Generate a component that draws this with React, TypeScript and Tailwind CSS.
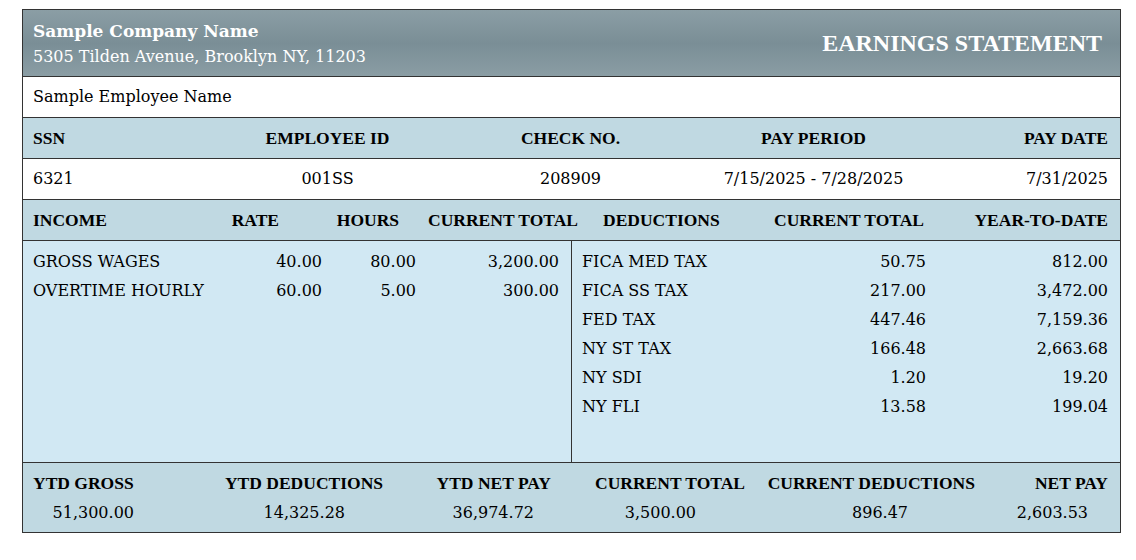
import React from "react";

const reg = "font-['DejaVu_Serif',serif]";
const hdr = "font-['Liberation_Serif',serif] font-bold text-[17.5px]";

export default function App() {
  const income = [
    ["GROSS WAGES", "40.00", "80.00", "3,200.00"],
    ["OVERTIME HOURLY", "60.00", "5.00", "300.00"],
  ];
  const deductions = [
    ["FICA MED TAX", "50.75", "812.00"],
    ["FICA SS TAX", "217.00", "3,472.00"],
    ["FED TAX", "447.46", "7,159.36"],
    ["NY ST TAX", "166.48", "2,663.68"],
    ["NY SDI", "1.20", "19.20"],
    ["NY FLI", "13.58", "199.04"],
  ];
  return (
    <div className={`w-[1136px] h-[560px] bg-white ${reg} text-[16px] text-black`}>
      <div className="pt-[9px] pl-[22px]">
        <div className="w-[1099px] border border-[#333]">
          {/* Header */}
          <div className="h-[66px] flex items-center justify-between pl-[10px] pr-[18px] text-white bg-[linear-gradient(to_bottom,#8b9ea5_0%,#7a8e96_50%,#8a9da4_100%)]">
            <div className="flex flex-col pt-[1px]">
              <div className="font-bold text-[17px] leading-[25px]">Sample Company Name</div>
              <div className="leading-[25px]">5305 Tilden Avenue, Brooklyn NY, 11203</div>
            </div>
            <div className="font-['Liberation_Serif',serif] font-bold text-[24px] leading-none">EARNINGS STATEMENT</div>
          </div>
          {/* Employee */}
          <div className="h-[41px] border-t border-[#333] bg-white flex items-center pl-[10px]">
            Sample Employee Name
          </div>
          {/* Labels */}
          <div className={`h-[41px] border-t border-[#333] bg-[#c0d9e2] grid grid-cols-[173px_243px_243px_243px_173px] items-center pl-[10px] pr-[11px] whitespace-nowrap ${hdr}`}>
            <div className="text-left">SSN</div>
            <div className="text-center">EMPLOYEE ID</div>
            <div className="text-center">CHECK NO.</div>
            <div className="text-center">PAY PERIOD</div>
            <div className="text-right">PAY DATE</div>
          </div>
          {/* Values */}
          <div className="h-[41px] border-t border-[#333] bg-white grid grid-cols-[173px_243px_243px_243px_173px] items-center pl-[10px] pr-[11px]">
            <div className="text-left">6321</div>
            <div className="text-center">001SS</div>
            <div className="text-center">208909</div>
            <div className="text-center whitespace-nowrap">7/15/2025 - 7/28/2025</div>
            <div className="text-right">7/31/2025</div>
          </div>
          {/* Column headers */}
          <div className={`h-[41px] border-t border-[#333] bg-[#c0d9e2] grid grid-cols-[147px_99px_120px_179px_182px_164px_184px] items-center pl-[10px] pr-[11px] whitespace-nowrap ${hdr}`}>
            <div className="text-left">INCOME</div>
            <div className="text-right">RATE</div>
            <div className="text-right">HOURS</div>
            <div className="text-right">CURRENT TOTAL</div>
            <div className="text-left pl-[25px]">DEDUCTIONS</div>
            <div className="text-right">CURRENT TOTAL</div>
            <div className="text-right">YEAR-TO-DATE</div>
          </div>
          {/* Body */}
          <div className="h-[222px] border-t border-[#333] bg-[#d1e8f3] grid grid-cols-[548px_549px]">
            <div className="pl-[10px] pr-[11px] pt-[6px]">
              {income.map((r) => (
                <div key={r[0]} className="grid grid-cols-[200px_89px_94px_143px] leading-[29px] whitespace-nowrap">
                  <div>{r[0]}</div>
                  <div className="text-right">{r[1]}</div>
                  <div className="text-right">{r[2]}</div>
                  <div className="text-right">{r[3]}</div>
                </div>
              ))}
            </div>
            <div className="border-l border-[#333] pl-[10px] pr-[11px] pt-[6px]">
              {deductions.map((r) => (
                <div key={r[0]} className="grid grid-cols-[200px_144px_182px] leading-[29px] whitespace-nowrap">
                  <div>{r[0]}</div>
                  <div className="text-right">{r[1]}</div>
                  <div className="text-right">{r[2]}</div>
                </div>
              ))}
            </div>
          </div>
          {/* Footer */}
          <div className="h-[70px] border-t border-[#333] bg-[#c0d9e2] flex flex-col justify-center pl-[10px] pr-[11px]">
            <div className={`grid grid-cols-[150px_200px_168px_194px_230px_133px] leading-[29px] whitespace-nowrap ${hdr}`}>
              <div className="text-left">YTD GROSS</div>
              <div className="text-right">YTD DEDUCTIONS</div>
              <div className="text-right">YTD NET PAY</div>
              <div className="text-right">CURRENT TOTAL</div>
              <div className="text-right">CURRENT DEDUCTIONS</div>
              <div className="text-right">NET PAY</div>
            </div>
            <div className="grid grid-cols-[101px_211px_189px_162px_212px_180px] leading-[29px] whitespace-nowrap">
              <div className="text-right">51,300.00</div>
              <div className="text-right">14,325.28</div>
              <div className="text-right">36,974.72</div>
              <div className="text-right">3,500.00</div>
              <div className="text-right">896.47</div>
              <div className="text-right">2,603.53</div>
            </div>
          </div>
        </div>
      </div>
    </div>
  );
}
